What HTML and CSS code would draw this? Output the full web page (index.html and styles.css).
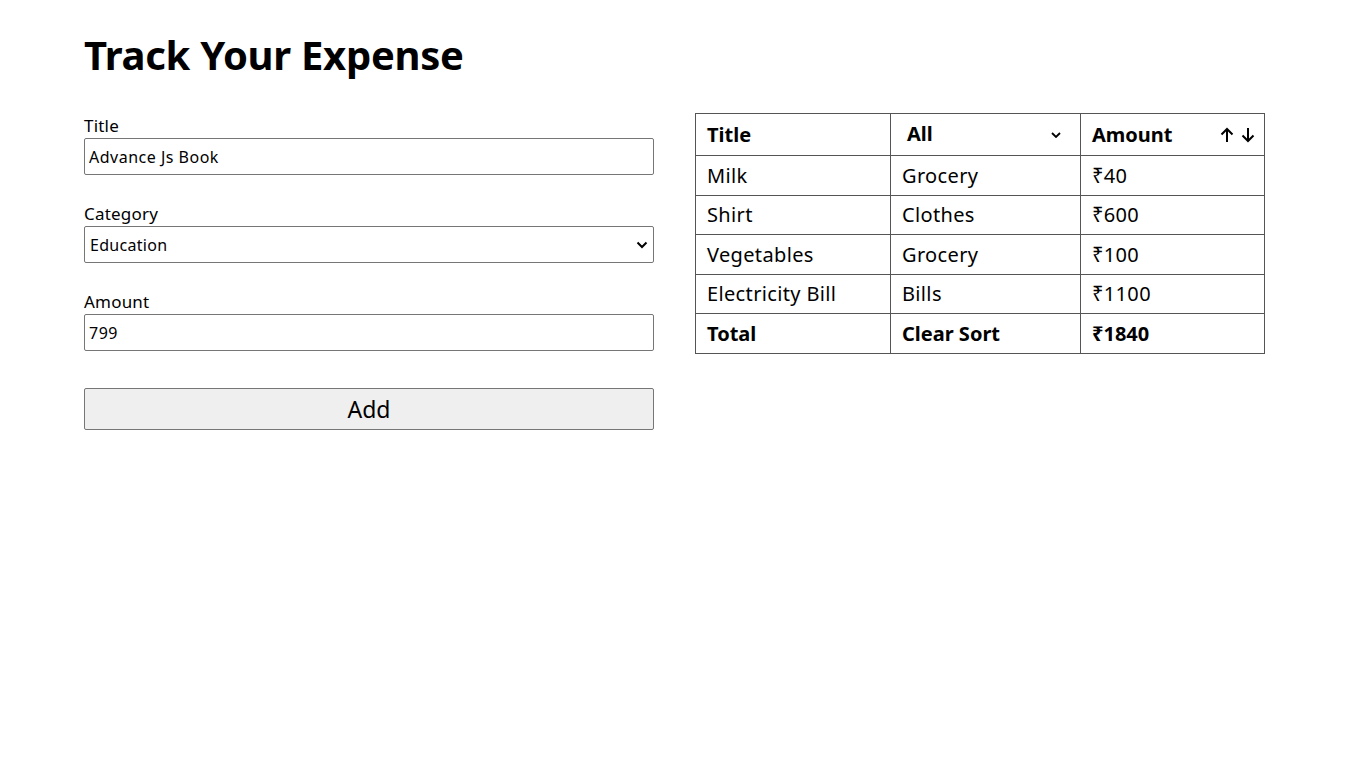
FILE: index.html
```html
<!DOCTYPE html>
<html lang="en">
<head>
<meta charset="utf-8">
<title>Track Your Expense</title>
<link rel="stylesheet" href="styles.css">
</head>
<body>
<main class="container">
  <h1 class="heading">Track Your Expense</h1>
  <div class="layout">
    <form class="expense-form">
      <div class="field">
        <label class="label" for="title">Title</label>
        <input class="control" id="title" type="text" value="Advance Js Book">
      </div>
      <div class="field">
        <label class="label" for="category">Category</label>
        <div class="select-wrap">
          <select class="control select" id="category">
            <option>Education</option>
          </select>
          <svg class="chevron" viewBox="0 0 12 8" width="12" height="8"><path d="M1.5 1.5 L6 6 L10.5 1.5" fill="none" stroke="#000" stroke-width="2"/></svg>
        </div>
      </div>
      <div class="field">
        <label class="label" for="amount">Amount</label>
        <input class="control" id="amount" type="text" value="799">
      </div>
      <button class="add-btn" type="button">Add</button>
    </form>

    <table class="expense-table">
      <thead>
        <tr>
          <th>Title</th>
          <th>
            <div class="th-flex th-select">
              <span>All</span>
              <svg class="chevron-sm" viewBox="0 0 10 6" width="10" height="6"><path d="M1 1 L5 5 L9 1" fill="none" stroke="#000" stroke-width="1.8"/></svg>
            </div>
          </th>
          <th>
            <div class="th-flex">
              <span>Amount</span>
              <span class="sort">
                <svg viewBox="0 0 14 16" width="14" height="16"><path d="M7 15 V2 M1.5 7.5 L7 2 L12.5 7.5" fill="none" stroke="#000" stroke-width="2"/></svg>
                <svg viewBox="0 0 14 16" width="14" height="16"><path d="M7 1 V14 M1.5 8.5 L7 14 L12.5 8.5" fill="none" stroke="#000" stroke-width="2"/></svg>
              </span>
            </div>
          </th>
        </tr>
      </thead>
      <tbody>
        <tr><td>Milk</td><td>Grocery</td><td>₹40</td></tr>
        <tr><td>Shirt</td><td>Clothes</td><td>₹600</td></tr>
        <tr><td>Vegetables</td><td>Grocery</td><td>₹100</td></tr>
        <tr><td>Electricity Bill</td><td>Bills</td><td>₹1100</td></tr>
        <tr class="total-row"><th>Total</th><th>Clear Sort</th><th>₹1840</th></tr>
      </tbody>
    </table>
  </div>
</main>
</body>
</html>
```

FILE: styles.css
```css
* { box-sizing: border-box; }

body {
  margin: 0;
  font-family: "Noto Sans", "DejaVu Sans", sans-serif;
  color: #000;
  background: #fff;
}

.container {
  margin: 0 83px 0 84px;
  padding-top: 28px;
}

.heading {
  margin: 0 0 31px;
  font-size: 40px;
  font-weight: 700;
  line-height: 54px;
  letter-spacing: -0.3px;
}

.layout {
  display: flex;
  gap: 41px;
  align-items: flex-start;
}

.expense-form {
  width: 570px;
  flex: none;
  display: flex;
  flex-direction: column;
  padding-top: 5px;
}

.field {
  display: flex;
  flex-direction: column;
  margin-bottom: 31px;
}

.label {
  font-size: 17px;
  line-height: 16px;
  margin-bottom: 4px;
  letter-spacing: 0.2px;
}

.control {
  height: 37px;
  width: 100%;
  border: 1px solid #767676;
  border-radius: 2px;
  padding: 0 4px;
  font-family: inherit;
  font-size: 16px;
  letter-spacing: 0.5px;
  color: #000;
  background: #fff;
}

.select-wrap { position: relative; }

.select {
  appearance: none;
  -webkit-appearance: none;
  padding-left: 5px;
  letter-spacing: 0.3px;
}

.chevron {
  position: absolute;
  right: 6px;
  top: 15px;
}

.add-btn {
  margin-top: 6px;
  height: 42px;
  width: 100%;
  border: 1px solid #767676;
  border-radius: 2px;
  background: #efefef;
  font-family: inherit;
  font-size: 23px;
  color: #000;
}

.expense-table {
  flex: 1;
  border-collapse: collapse;
  font-size: 20px;
  letter-spacing: 0.35px;
}

.expense-table th,
.expense-table td {
  border: 1px solid #555;
  text-align: left;
  padding: 0 11px;
  height: 39.5px;
  font-weight: 400;
}

.expense-table th {
  font-weight: 700;
  letter-spacing: 0;
}

.expense-table thead th { height: 42px; }

.expense-table tr > :nth-child(1) { width: 195px; }
.expense-table tr > :nth-child(2) { width: 190px; }

.th-flex {
  display: flex;
  align-items: center;
  justify-content: space-between;
}

.th-select { padding-left: 5px; padding-right: 8px; }
.th-select span { position: relative; top: -1px; }

.sort {
  display: flex;
  gap: 7px;
  margin-right: -2px;
}
```
